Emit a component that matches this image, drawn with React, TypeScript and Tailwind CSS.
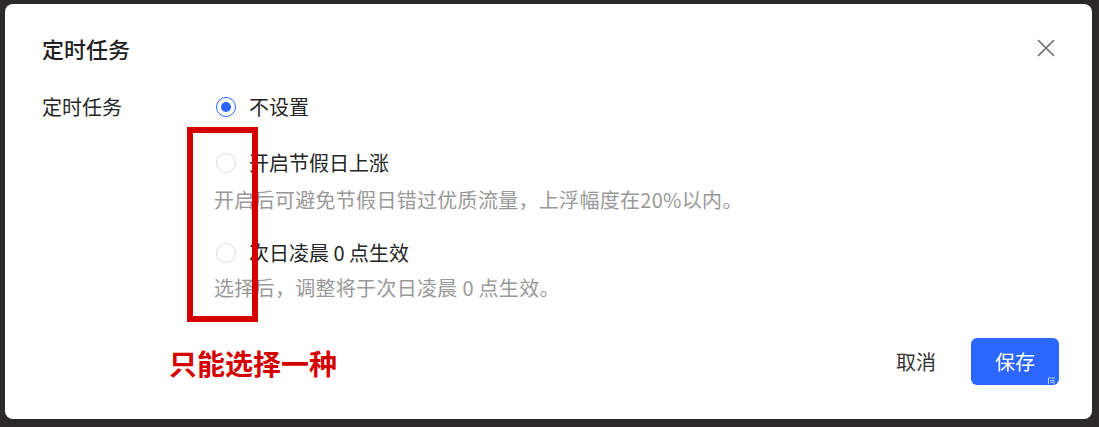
import React from "react";

const font = { fontFamily: '"Noto Sans CJK SC", "Noto Sans", sans-serif' };

function Radio({ checked }: { checked?: boolean }) {
  return checked ? (
    <span className="flex h-[20px] w-[20px] shrink-0 items-center justify-center rounded-full border-[1.5px] border-[#2b66ff] bg-white">
      <span className="h-[10px] w-[10px] rounded-full bg-[#2b66ff]" />
    </span>
  ) : (
    <span className="h-[20px] w-[20px] shrink-0 rounded-full border border-[#dcdcdc] bg-white" />
  );
}

export default function App() {
  return (
    <div className="h-[427px] w-[1099px] bg-[#2c2a28] pl-[5px] pt-[4px]" style={font}>
      <div className="relative h-[415px] w-[1087px] rounded-[8px] bg-white pl-[37px] pr-[33px]">
        {/* header */}
        <div className="flex h-[58px] items-end justify-between">
          <div className="text-[22px] font-medium leading-[28px] text-[#1f1f1f]">定时任务</div>
          <svg width="18" height="18" viewBox="0 0 18 18" className="mb-[5px] mr-[4px]">
            <path d="M1.5 1.5 L16.5 16.5 M16.5 1.5 L1.5 16.5" stroke="#6b6b6b" strokeWidth="1.6" strokeLinecap="round" />
          </svg>
        </div>

        {/* body */}
        <div className="mt-[31px] flex">
          <div className="w-[172px] shrink-0 text-[20px] leading-[28px] text-[#262626]">定时任务</div>
          <div className="flex flex-col text-[20px] leading-[28px]">
            <div className="flex items-center gap-[13px] pl-[2px]">
              <Radio checked />
              <span className="text-[#262626]">不设置</span>
            </div>
            <div className="mt-[28px] flex items-center gap-[13px] pl-[2px]">
              <Radio />
              <span className="text-[#262626]">开启节假日上涨</span>
            </div>
            <div className="mt-[9px] tracking-[0.3px] text-[#999999]">开启后可避免节假日错过优质流量，上浮幅度在20%以内。</div>
            <div className="mt-[25px] flex items-center gap-[13px] pl-[2px]">
              <Radio />
              <span className="text-[#262626]">次日凌晨 0 点生效</span>
            </div>
            <div className="mt-[7px] tracking-[0.3px] text-[#999999]">选择后，调整将于次日凌晨 0 点生效。</div>
          </div>
        </div>

        {/* footer */}
        <div className="mt-[36px] flex items-center justify-end">
          <span className="mr-[35px] text-[20px] leading-[28px] text-[#333333]">取消</span>
          <div className="relative flex h-[47px] w-[88px] items-center justify-center rounded-[6px] bg-[#2b66ff] text-[20px] text-white">
            保存
            <svg width="9" height="7" viewBox="0 0 9 7" className="absolute bottom-[1px] right-[3px]">
              <path d="M1 1 H8 M1.5 1 V7 M3 3.5 H7 V7 M3.5 5.5 H6" stroke="#c9d8ff" strokeWidth="0.9" fill="none" />
            </svg>
          </div>
        </div>

        {/* annotations */}
        <div className="absolute left-[182px] top-[123px] h-[195px] w-[71px] border-[6px] border-[#d40000]" />
        <div className="absolute left-[164px] top-[341px] text-[28px] font-bold leading-[36px] text-[#d40000]">只能选择一种</div>
      </div>
    </div>
  );
}
